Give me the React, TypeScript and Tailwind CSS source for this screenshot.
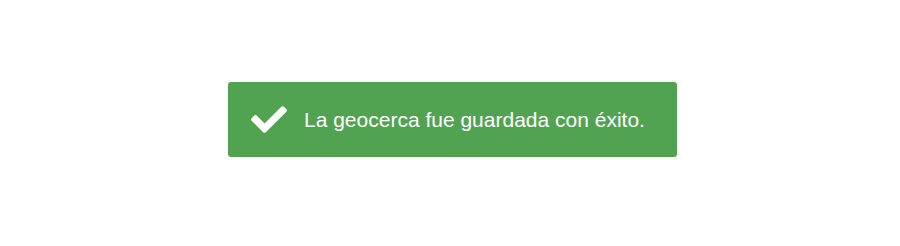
export default function App() {
  return (
    <div className="flex h-[246px] w-full justify-center bg-white pl-[5px] pt-[82px]">
      <div className="flex h-[75px] w-[449px] items-center rounded-[3px] bg-[#51a351] pl-[23px] text-white">
        <svg viewBox="0 63 512 386" className="h-[27px] w-[36px] shrink-0" fill="currentColor">
          <path d="M173.898 439.404l-166.4-166.4c-9.997-9.997-9.997-26.206 0-36.204l36.203-36.204c9.997-9.998 26.207-9.998 36.204 0L192 312.69 432.095 72.596c9.997-9.997 26.207-9.997 36.204 0l36.203 36.204c9.997 9.997 9.997 26.206 0 36.204l-294.4 294.401c-9.998 9.997-26.207 9.997-36.204-.001z" />
        </svg>
        <span className="ml-[17px] font-['Liberation_Sans',Arial,sans-serif] text-[21px] leading-none">
          La geocerca fue guardada con éxito.
        </span>
      </div>
    </div>
  );
}
